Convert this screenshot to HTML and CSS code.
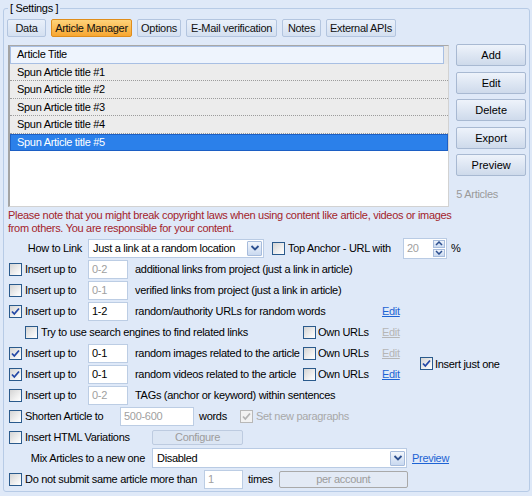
FILE: index.html
```html
<!DOCTYPE html>
<html>
<head>
<meta charset="utf-8">
<link rel="stylesheet" href="styles.css">
</head>
<body>
<fieldset class="group">
  <legend class="group-title">[ Settings ]</legend>
  <div class="tabs">
    <span class="tab tab-data">Data</span>
    <span class="tab tab-am active">Article Manager</span>
    <span class="tab tab-opt">Options</span>
    <span class="tab tab-mail">E-Mail verification</span>
    <span class="tab tab-notes">Notes</span>
    <span class="tab tab-api">External APIs</span>
  </div>

  <div class="manager">
    <div class="listbox">
      <div class="list-headrow"><div class="list-head">Article Title</div></div>
      <div class="list-row">Spun Article title #1</div>
      <div class="list-row">Spun Article title #2</div>
      <div class="list-row">Spun Article title #3</div>
      <div class="list-row">Spun Article title #4</div>
      <div class="list-row sel">Spun Article title #5</div>
    </div>
    <div class="side">
      <button class="btn">Add</button>
      <button class="btn">Edit</button>
      <button class="btn">Delete</button>
      <button class="btn">Export</button>
      <button class="btn">Preview</button>
      <div class="count">5 Articles</div>
    </div>
  </div>

  <p class="note">Please note that you might break copyright laws when using content like article, videos or images<br>from others. You are responsible for your content.</p>

  <div class="form">
    <div class="row">
      <span class="lbl-r">How to Link</span>
      <span class="select sel-link"><span class="select-text">Just a link at a random location</span><span class="select-btn"><svg width="10" height="8" viewBox="0 0 10 8"><path d="M1.5 2 L5 5.5 L8.5 2" fill="none" stroke="#2c4f8f" stroke-width="1.8"/></svg></span></span>
      <span class="lbl anchor"><span class="cb"></span>Top Anchor - URL with</span>
      <span class="spin"><span class="spin-text">20</span><span class="spin-btns"><span class="spin-b"><svg width="8" height="5" viewBox="0 0 8 5"><path d="M1 4 L4 1 L7 4" fill="none" stroke="#2c4f8f" stroke-width="1.5"/></svg></span><span class="spin-b"><svg width="8" height="5" viewBox="0 0 8 5"><path d="M1 1 L4 4 L7 1" fill="none" stroke="#2c4f8f" stroke-width="1.5"/></svg></span></span></span>
      <span class="pct">%</span>
    </div>

    <div class="row">
      <span class="lbl w-ins"><span class="cb"></span>Insert up to</span>
      <span class="num off">0-2</span>
      <span class="desc">additional links from project (just a link in article)</span>
    </div>
    <div class="row">
      <span class="lbl w-ins"><span class="cb"></span>Insert up to</span>
      <span class="num off">0-1</span>
      <span class="desc">verified links from project (just a link in article)</span>
    </div>
    <div class="row">
      <span class="lbl w-ins"><span class="cb"><svg class="chk" width="11" height="11" viewBox="0 0 11 11"><path d="M2 5.5 L4.3 8 L9 2.5" fill="none" stroke="#2448a6" stroke-width="1.8"/></svg></span>Insert up to</span>
      <span class="num">1-2</span>
      <span class="desc desc-long">random/authority URLs for random words</span>
      <span class="link">Edit</span>
    </div>
    <div class="row">
      <span class="lbl w-try"><span class="cb"></span>Try to use search engines to find related links</span>
      <span class="lbl w-own"><span class="cb"></span>Own URLs</span>
      <span class="link off">Edit</span>
    </div>

    <div class="pair">
      <div class="pair-rows">
        <div class="row">
          <span class="lbl w-ins"><span class="cb"><svg class="chk" width="11" height="11" viewBox="0 0 11 11"><path d="M2 5.5 L4.3 8 L9 2.5" fill="none" stroke="#2448a6" stroke-width="1.8"/></svg></span>Insert up to</span>
          <span class="num">0-1</span>
          <span class="desc desc-mid">random images related to the article</span>
          <span class="lbl w-own"><span class="cb"></span>Own URLs</span>
          <span class="link off">Edit</span>
        </div>
        <div class="row">
          <span class="lbl w-ins"><span class="cb"><svg class="chk" width="11" height="11" viewBox="0 0 11 11"><path d="M2 5.5 L4.3 8 L9 2.5" fill="none" stroke="#2448a6" stroke-width="1.8"/></svg></span>Insert up to</span>
          <span class="num">0-1</span>
          <span class="desc desc-mid">random videos related to the article</span>
          <span class="lbl w-own"><span class="cb"></span>Own URLs</span>
          <span class="link">Edit</span>
        </div>
      </div>
      <span class="lbl just"><span class="cb"><svg class="chk" width="11" height="11" viewBox="0 0 11 11"><path d="M2 5.5 L4.3 8 L9 2.5" fill="none" stroke="#2448a6" stroke-width="1.8"/></svg></span>Insert just one</span>
    </div>

    <div class="row">
      <span class="lbl w-ins"><span class="cb"></span>Insert up to</span>
      <span class="num off">0-2</span>
      <span class="desc">TAGs (anchor or keyword) within sentences</span>
    </div>

    <div class="row">
      <span class="lbl w-short"><span class="cb"></span>Shorten Article to</span>
      <span class="num num-wide off">500-600</span>
      <span class="words">words</span>
      <span class="lbl dis"><span class="cb cb-dis"><svg class="chk" width="11" height="11" viewBox="0 0 11 11"><path d="M2 5.5 L4.3 8 L9 2.5" fill="none" stroke="#b4b4b4" stroke-width="1.8"/></svg></span>Set new paragraphs</span>
    </div>

    <div class="row">
      <span class="lbl w-html"><span class="cb"></span>Insert HTML Variations</span>
      <span class="dbtn cfg">Configure</span>
    </div>

    <div class="row">
      <span class="lbl-r w-mix">Mix Articles to a new one</span>
      <span class="select sel-mix"><span class="select-text">Disabled</span><span class="select-btn"><svg width="10" height="8" viewBox="0 0 10 8"><path d="M1.5 2 L5 5.5 L8.5 2" fill="none" stroke="#2c4f8f" stroke-width="1.8"/></svg></span></span>
      <span class="link preview">Preview</span>
    </div>

    <div class="row">
      <span class="lbl w-dns"><span class="cb"></span>Do not submit same article more than</span>
      <span class="num num-sm off">1</span>
      <span class="times">times</span>
      <span class="dbtn per">per account</span>
    </div>
  </div>
</fieldset>
</body>
</html>
```

FILE: styles.css
```css
* { box-sizing: border-box; }

body {
  margin: 0;
  width: 532px;
  height: 496px;
  overflow: hidden;
  background: #dfe9f8;
  font-family: "Liberation Sans", Arial, sans-serif;
  font-size: 11px;
  letter-spacing: -0.3px;
  color: #000;
}

.group {
  margin: 2px 2px 0 3px;
  padding: 4px 3px 0 4px;
  height: 490px;
  border: 1px solid #b7cbe6;
  border-radius: 3px;
  min-width: 0;
}

.group-title {
  padding: 0 2px;
  line-height: 13px;
}

/* tabs */
.tabs {
  display: flex;
  gap: 5px;
  margin-left: -1px;
}
.tab {
  height: 18px;
  line-height: 16px;
  text-align: center;
  border: 1px solid #b3c5df;
  border-radius: 2px;
  background: linear-gradient(#e9f0fa, #d4e0f1);
  color: #111;
}
.tab.active {
  background: linear-gradient(#ffd37a, #f7a631);
  border-color: #df8d1c;
}
.tab-data { width: 39px; }
.tab-am { width: 81px; }
.tab-opt { width: 44px; }
.tab-mail { width: 91px; }
.tab-notes { width: 39px; }
.tab-api { width: 70px; }

/* list + buttons */
.manager {
  display: flex;
  gap: 7px;
  margin-top: 8px;
}
.listbox {
  width: 443px;
  height: 162px;
  background: #fff;
  border: 1px solid #d2d2d2;
  border-left: 2px solid #a4a4a4;
  border-top-color: #a8a8a8;
}
.list-headrow {
  height: 17.5px;
  background: #e7e7e7;
}
.list-head {
  width: 434px;
  height: 17.5px;
  line-height: 15.5px;
  padding-left: 6px;
  border: 1px solid #a8bfe3;
  background: #eef4fd;
}
.list-row {
  height: 17.5px;
  line-height: 16.5px;
  padding-left: 7px;
  background: #ececec;
  border-bottom: 1px dotted #9c9c9c;
}
.list-row.sel {
  background: #2b80ea;
  color: #fff;
  border: 1px solid #1c5fc4;
  padding-left: 6px;
  line-height: 15px;
}

.side {
  width: 70px;
  display: flex;
  flex-direction: column;
  gap: 5.5px;
  margin-top: -1px;
}
.btn {
  height: 22px;
  padding: 0;
  font: inherit;
  color: #000;
  border: 1px solid #a8b9d2;
  border-radius: 2px;
  background: linear-gradient(#eef3fb, #cedaeb);
}
.count {
  margin-top: 6px;
  line-height: 13px;
  color: #9a9a9a;
}

.note {
  margin: 1.5px 0 0;
  line-height: 13px;
  color: #a3232b;
}

/* form */
.form {
  margin-top: 3px;
  padding-left: 1px;
}
.row {
  display: flex;
  align-items: center;
  height: 21px;
  white-space: nowrap;
}
.lbl {
  display: flex;
  align-items: center;
  gap: 3px;
  flex: none;
}
.lbl-r {
  flex: none;
  width: 79px;
  text-align: right;
  padding-right: 6px;
}
.w-ins { width: 79px; }
.w-try { width: 294px; padding-left: 16px; }
.w-own { width: 79px; gap: 2px; }
.w-short { width: 111px; }
.w-html { width: 143px; }
.w-mix { width: 143px; padding-right: 7px; }
.w-dns { width: 195px; }

.cb {
  flex: none;
  width: 13px;
  height: 13px;
  border: 1px solid #2a5a8c;
  background: linear-gradient(135deg, #d4d4d4, #f4f4f4 70%, #fff);
  display: flex;
  align-items: center;
  justify-content: center;
}
.cb-dis {
  border-color: #b8b8b8;
  background: #f2f2f2;
}
.dis { color: #a8a8a8; }

.num {
  flex: none;
  width: 40px;
  height: 19px;
  line-height: 17px;
  padding-left: 3px;
  background: #fff;
  border: 1px solid #bccde4;
}
.num.off { color: #a0a0a0; }
.num-wide { width: 74px; }
.num-sm { width: 39px; }

.desc { margin-left: 7px; flex: none; }
.desc-long { width: 247px; }
.desc-mid { width: 168px; }

.link {
  color: #1d63d4;
  text-decoration: underline;
}
.link.off { color: #b6b6b6; }

.select {
  flex: none;
  display: flex;
  align-items: center;
  height: 19px;
  background: #fff;
  border: 1px solid #b9cbe4;
}
.select-text {
  flex: 1;
  padding-left: 4px;
}
.select-btn {
  width: 15px;
  height: 15px;
  margin-right: 1px;
  border: 1px solid #a7bcdc;
  border-radius: 1px;
  background: linear-gradient(#f2f6fc, #c9d9f0);
  display: flex;
  align-items: center;
  justify-content: center;
}
.sel-link { width: 176px; }
.sel-mix { width: 255px; height: 20px; }

.anchor {
  width: 131px;
  margin-left: 8px;
}

.spin {
  flex: none;
  display: flex;
  width: 44px;
  height: 21px;
  background: #fff;
  border: 1px solid #b9cbe4;
}
.spin-text {
  flex: 1;
  padding-left: 3px;
  line-height: 19px;
  color: #a0a0a0;
}
.spin-btns {
  width: 13px;
  display: flex;
  flex-direction: column;
  gap: 1px;
  padding: 1px 1px 1px 0;
}
.spin-b {
  flex: 1;
  border: 1px solid #a7bcdc;
  background: linear-gradient(#eef3fb, #c9d9f0);
  display: flex;
  align-items: center;
  justify-content: center;
}
.pct { margin-left: 4px; }

.pair {
  display: flex;
  align-items: center;
}
.pair-rows { width: 402px; }
.just { margin-left: 9px; gap: 2px; }

.words {
  flex: none;
  width: 41px;
  margin-left: 5px;
}

.dbtn {
  flex: none;
  text-align: center;
  color: #9c9c9c;
  border-radius: 2px;
}
.cfg {
  width: 91px;
  height: 15px;
  line-height: 13px;
  border: 1px solid #bdcbe0;
  background: #dce6f4;
}
.preview { margin-left: 5px; }
.times { margin: 0 6px 0 5px; }
.per {
  width: 129px;
  height: 17px;
  line-height: 15px;
  border: 1px solid #a9a9a9;
  background: #e3eaf5;
}
```
